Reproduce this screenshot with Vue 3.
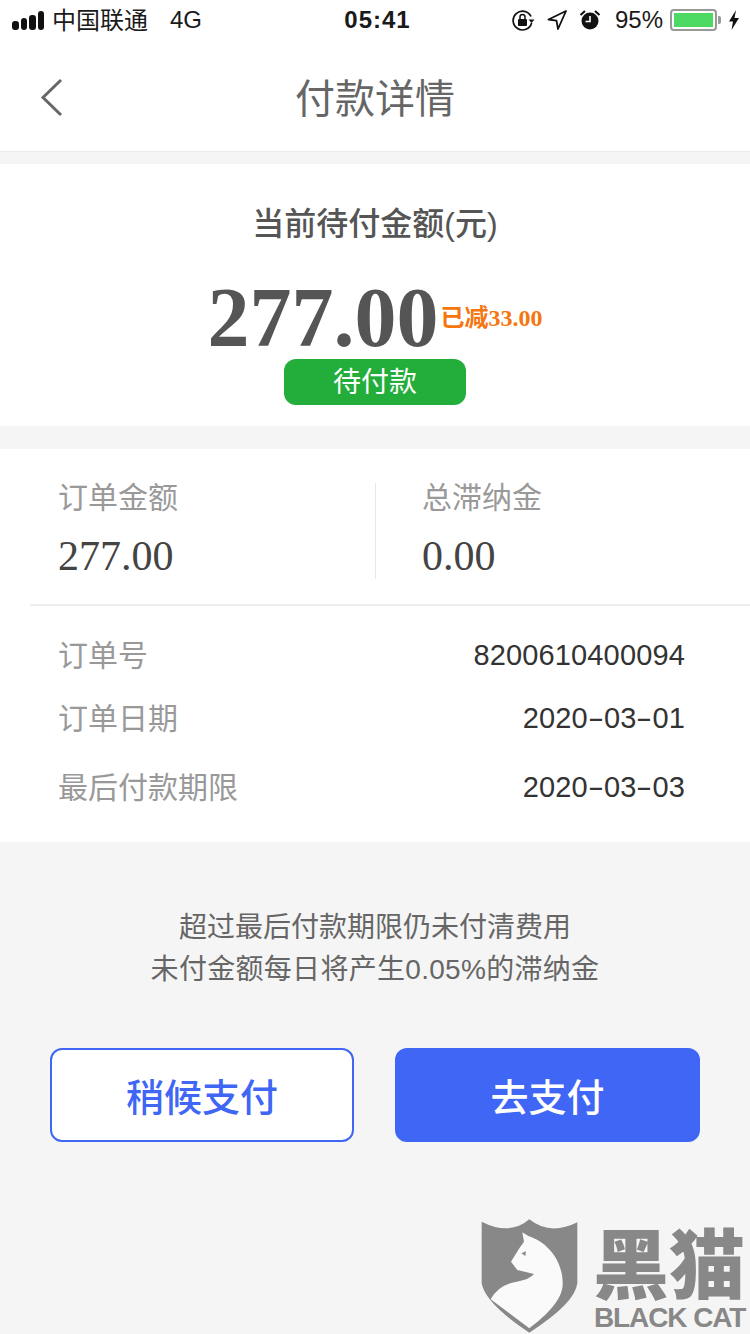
<template>
  <div class="page">
    <!-- status bar -->
    <div class="status">
      <div class="status-left">
        <div class="signal">
          <i style="height: 9px"></i><i style="height: 12px"></i><i style="height: 15px"></i><i style="height: 19px"></i>
        </div>
        <span class="carrier">中国联通</span>
        <span class="net">4G</span>
      </div>
      <div class="time">05:41</div>
      <div class="status-right">
        <svg class="ico-lock" width="24" height="22" viewBox="0 0 24 22">
          <path d="M20 7.5A9.4 9.4 0 1 0 20.600 14" fill="none" stroke="#111" stroke-width="1.7" />
          <path d="M17.500 10.500h6l-3 3.500z" fill="#111" />
          <rect x="7" y="10" width="9" height="7" rx="1" fill="#111" />
          <path d="M9 10V8a2.500 2.500 0 0 1 5 0v2" fill="none" stroke="#111" stroke-width="1.500" />
        </svg>
        <svg class="ico-loc" width="20" height="20" viewBox="0 0 20 20">
          <path d="M19 1L1.500 9.500l8 1.200L11 19z" fill="none" stroke="#111" stroke-width="1.800" stroke-linejoin="round" />
        </svg>
        <svg class="ico-alarm" width="22" height="22" viewBox="0 0 22 22">
          <circle cx="11" cy="12" r="8.500" fill="#111" />
          <path d="M11 7v5.500H6.500" fill="none" stroke="#fff" stroke-width="1.600" />
          <path d="M1.500 6L6 2M20.500 6L16 2" stroke="#111" stroke-width="2.200" />
        </svg>
        <span class="pct">95%</span>
        <div class="battery"><div class="battery-fill"></div></div>
        <div class="battery-tip"></div>
        <svg class="ico-bolt" width="12" height="22" viewBox="0 0 12 22">
          <path d="M8 1L1 12.500h4L3.500 21 11 9H6.500z" fill="#111" />
        </svg>
      </div>
    </div>

    <!-- nav -->
    <div class="nav">
      <svg class="back" width="24" height="40" viewBox="0 0 24 40">
        <path d="M21 2L3 19.500 21 37" fill="none" stroke="#666" stroke-width="3" />
      </svg>
      <div class="nav-title">付款详情</div>
    </div>

    <!-- amount -->
    <div class="card amount-card">
      <div class="amount-label">当前待付金额(元)</div>
      <div class="amount-row">
        <span class="amount">277.00</span>
        <span class="reduce">已减33.00</span>
      </div>
      <div class="badge">待付款</div>
    </div>

    <!-- order detail -->
    <div class="card detail-card">
      <div class="stats">
        <div class="stat">
          <div class="stat-label">订单金额</div>
          <div class="stat-value">277.00</div>
        </div>
        <div class="stat stat-right">
          <div class="stat-label">总滞纳金</div>
          <div class="stat-value">0.00</div>
        </div>
      </div>
      <div class="rows">
        <div class="row row1"><span class="row-label">订单号</span><span class="row-value">8200610400094</span></div>
        <div class="row row2"><span class="row-label">订单日期</span><span class="row-value">2020<span class="dash">-</span>03<span class="dash">-</span>01</span></div>
        <div class="row row3"><span class="row-label">最后付款期限</span><span class="row-value">2020<span class="dash">-</span>03<span class="dash">-</span>03</span></div>
      </div>
    </div>

    <!-- notice and actions -->
    <div class="notice">
      <div>超过最后付款期限仍未付清费用</div>
      <div class="notice-wide">未付金额每日将产生0.05%的滞纳金</div>
    </div>
    <div class="actions">
      <button class="btn btn-line">稍候支付</button>
      <button class="btn btn-solid">去支付</button>
    </div>

    <!-- watermark -->
    <div class="mark">
      <svg class="mark-logo" width="99" height="116" viewBox="60 54 297 348">
        <path d="M65 65Q150 108 208 58Q270 108 352 67L352 250Q345 310 208 398Q75 310 65 250Z" fill="#888" />
        <path d="M187 97L205 108C260 125 310 180 308 255C306 300 260 345 208 385L92 298Q115 255 170 245Q210 238 222 222L172 210L153 185L178 145L192 125Z" fill="#fafafa" />
        <path d="M184 160L198 154 196 168z" fill="#888" />
      </svg>
      <div class="mark-text">
        <div class="mark-cn">黑猫</div>
        <div class="mark-en">BLACK CAT</div>
      </div>
    </div>
  </div>
</template>

<script setup>
</script>

<style>
html, body {
  margin: 0;
  background: #f5f5f5;
}
</style>

<style scoped>
.page {
  position: relative;
  width: 750px;
  height: 1334px;
  overflow: hidden;
  background: #f5f5f5;
  font-family: "Liberation Sans", "Noto Sans CJK SC", sans-serif;
}

.status {
  display: flex;
  align-items: center;
  justify-content: space-between;
  height: 40px;
  padding: 0 10px 0 12px;
  background: #fff;
  color: #1a1a1a;
  font-size: 24px;
}
.status-left, .status-right {
  display: flex;
  align-items: center;
  flex: 1;
}
.status-right {
  justify-content: flex-end;
}
.signal {
  display: flex;
  align-items: flex-end;
  gap: 2px;
  margin-right: 7px;
}
.signal i {
  display: block;
  width: 6.500px;
  border-radius: 3px;
  background: #111;
}
.carrier {
  width: 118px;
  margin-top: -3px;
  margin-left: 1px;
}
.time {
  width: 68px;
  margin-left: 3px;
  text-align: center;
  font-weight: 700;
  letter-spacing: 1px;
}
.ico-lock { margin-right: 12px; }
.ico-loc { margin-right: 12px; }
.ico-alarm { margin-right: 14px; }
.pct { margin-right: 7px; }
.battery {
  box-sizing: border-box;
  width: 47px;
  height: 22px;
  padding: 2px;
  border: 2px solid #999;
  border-radius: 4px;
}
.battery-fill {
  width: 39px;
  height: 100%;
  background: #4cd964;
}
.battery-tip {
  width: 3px;
  height: 8px;
  margin: 0 7px 0 1px;
  background: #999;
  border-radius: 0 2px 2px 0;
}

.nav {
  position: relative;
  display: flex;
  align-items: center;
  justify-content: center;
  box-sizing: border-box;
  height: 112px;
  background: #fff;
  border-bottom: 1px solid #ebebeb;
}
.back {
  position: absolute;
  left: 40px;
  top: 38px;
}
.nav-title {
  font-size: 40px;
  color: #666;
}

.card {
  background: #fff;
}
.amount-card {
  display: flex;
  flex-direction: column;
  align-items: center;
  box-sizing: border-box;
  height: 262px;
  margin-top: 12px;
  padding-top: 40px;
}
.amount-label {
  font-size: 32px;
  line-height: 40px;
  font-weight: 500;
  color: #555;
}
.amount-row {
  display: flex;
  align-items: center;
  gap: 2px;
  height: 84px;
  margin-top: 32px;
}
.amount {
  font-family: "Liberation Serif", serif;
  font-size: 84px;
  line-height: 84px;
  font-weight: 700;
  color: #555;
}
.reduce {
  white-space: nowrap;
  font-family: "Liberation Serif", "Noto Sans CJK SC", serif;
  font-size: 24px;
  line-height: 36px;
  font-weight: 700;
  color: #f5760f;
}
.badge {
  width: 182px;
  height: 46px;
  margin-top: -1px;
  border-radius: 12px;
  background: #23ad3a;
  color: #fff;
  font-size: 28px;
  line-height: 48px;
  text-align: center;
}

.detail-card {
  box-sizing: border-box;
  height: 393px;
  margin-top: 23px;
  padding-top: 34px;
}
.stats {
  display: flex;
  box-sizing: border-box;
  height: 123px;
  margin-left: 30px;
  border-bottom: 2px solid #eee;
}
.stat {
  box-sizing: border-box;
  width: 345px;
  height: 96px;
  padding-left: 28px;
}
.stat-right {
  width: 375px;
  padding-left: 46px;
  border-left: 1px solid #e8e8e8;
}
.stat-label {
  font-size: 30px;
  line-height: 30px;
  color: #999;
}
.stat-value {
  margin-top: 20px;
  font-family: "Liberation Serif", serif;
  font-size: 42px;
  line-height: 46px;
  color: #444;
}

.rows {
  padding: 0 65px 0 58px;
}
.row {
  display: flex;
  align-items: center;
  justify-content: space-between;
  height: 40px;
}
.row1 { margin-top: 27px; }
.row2 { margin-top: 23px; }
.row3 { margin-top: 29px; }
.row-label {
  font-size: 30px;
  color: #999;
}
.row-value {
  position: relative;
  top: 2px;
  font-size: 29px;
  color: #333;
  letter-spacing: 0.15px;
}
.dash {
  display: inline-block;
  width: 16px;
  transform: scaleX(1.7);
  text-align: center;
}

.notice {
  margin-top: 65px;
  font-size: 28px;
  line-height: 42px;
  color: #666;
  text-align: center;
}
.notice-wide {
  letter-spacing: 0.3px;
}

.actions {
  display: flex;
  justify-content: space-between;
  margin-top: 57px;
  padding: 0 50px;
}
.btn {
  box-sizing: border-box;
  height: 94px;
  padding: 0 0 2px;
  border: 2px solid #3f66f5;
  border-radius: 12px;
  font-family: "Liberation Sans", "Noto Sans CJK SC", sans-serif;
  font-size: 38px;
  font-weight: 500;
}
.btn-line {
  width: 304px;
  background: #fff;
  color: #3f66f5;
}
.btn-solid {
  width: 305px;
  background: #3f66f5;
  color: #fff;
}

.mark {
  position: absolute;
  left: 480px;
  top: 1218px;
  display: flex;
}
.mark-text {
  margin-left: 14px;
  color: #888;
}
.mark-cn {
  margin-top: 11px;
  font-size: 76px;
  line-height: 76px;
  font-weight: 900;
  white-space: nowrap;
}
.mark-en {
  margin-top: -1px;
  margin-left: 1px;
  font-size: 28px;
  line-height: 28px;
  font-weight: 700;
  letter-spacing: -1.100px;
  white-space: nowrap;
}
</style>
